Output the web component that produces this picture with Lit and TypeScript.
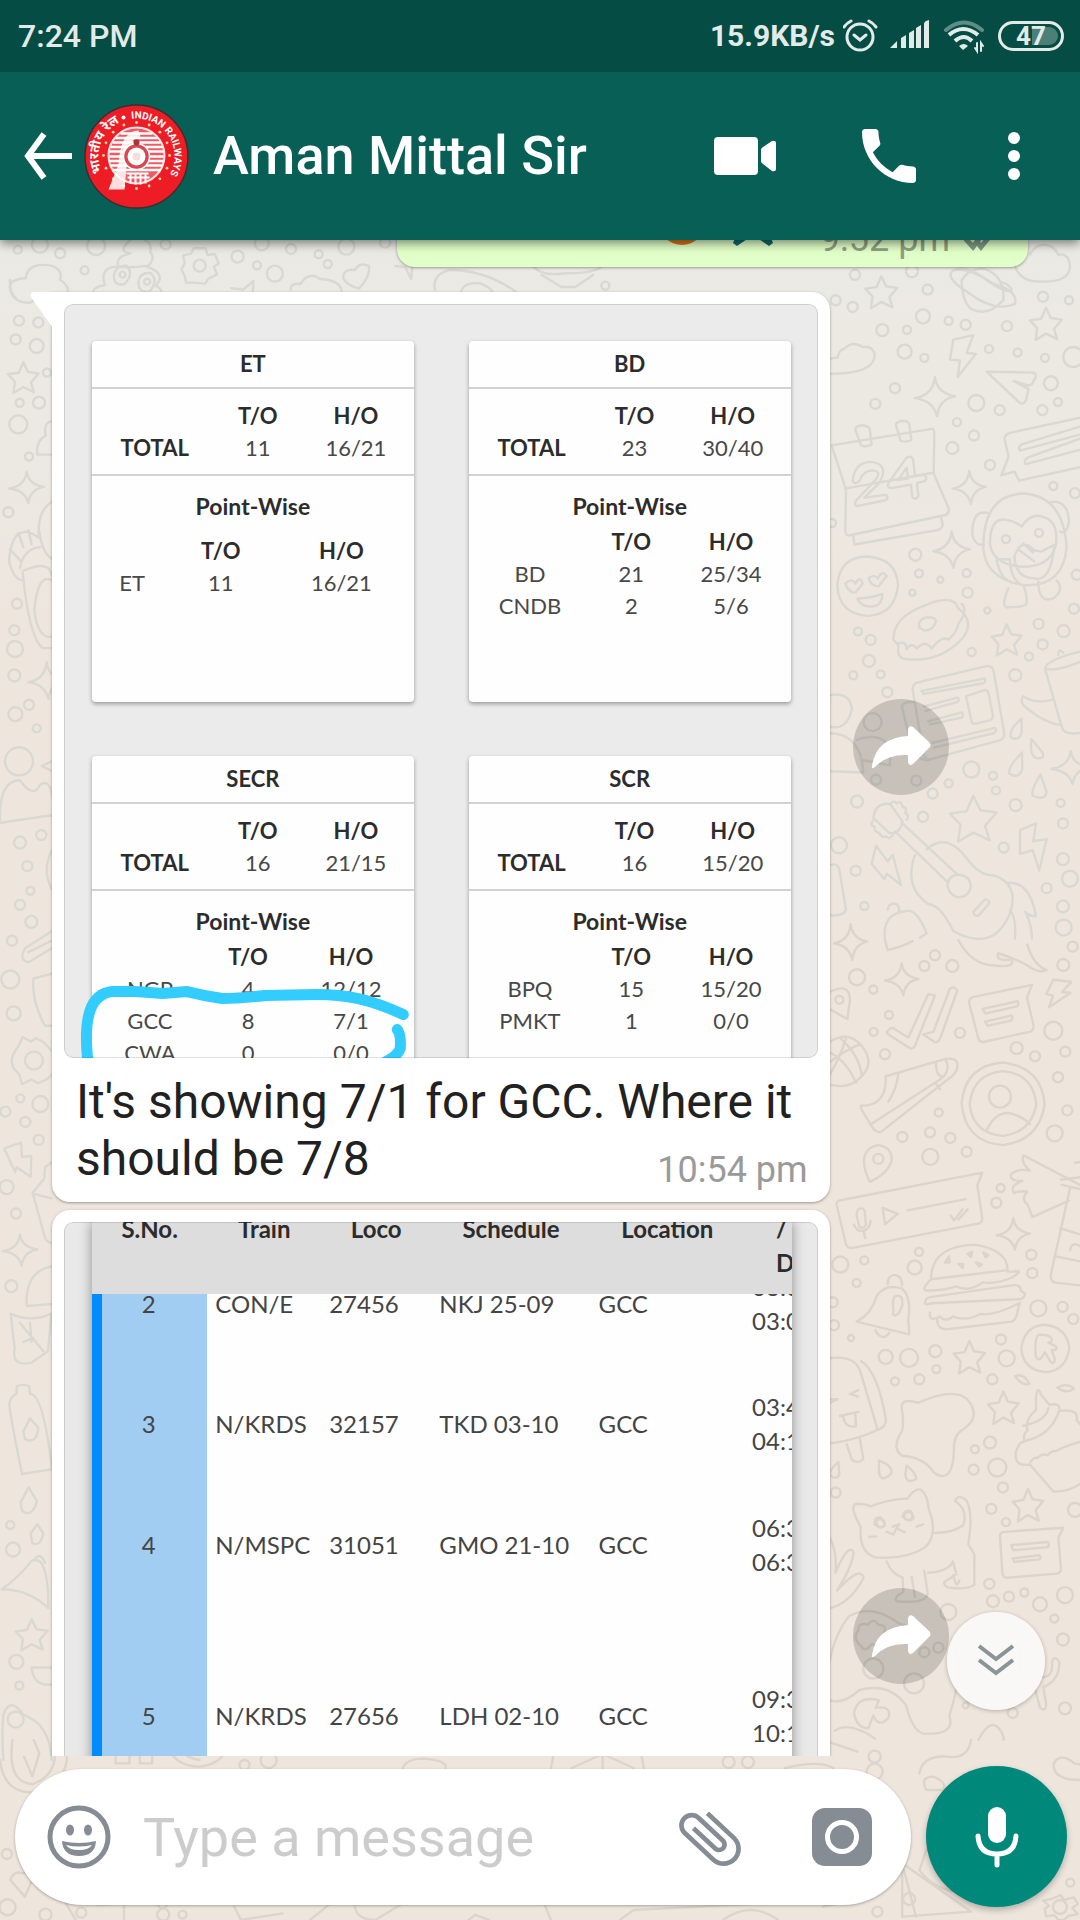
import { LitElement, html, css, svg, nothing } from "lit";
import { customElement, property } from "lit/decorators.js";

const FONT = css`Roboto, "Liberation Sans", sans-serif`;
const SHEET_FONT = css`Lato, "Open Sans", sans-serif`;

/* ---------- wallpaper ---------- */

interface Patch {
  x: number;
  y: number;
  sx: number;
  sy: number;
  dots: number[][];
  lines: string[];
}

const star = (x: number, y: number, w: number, h: number) =>
  `M${x} ${y - h}l${w * 0.3} ${h * 0.65}l${w * 0.7} ${h * 0.1}l${-w * 0.5} ${h * 0.6}l${w * 0.2} ${h * 0.65}l${-w * 0.7} ${-h * 0.35}l${-w * 0.65} ${h * 0.4}l${w * 0.1} ${-h * 0.75}l${-w * 0.45} ${-h * 0.5}l${w * 0.7} ${-h * 0.1}z`;
const spark = (x: number, y: number, w: number, h: number) =>
  `M${x} ${y - h}q${w * 0.1} ${h * 0.8} ${w} ${h * 0.95}q${-w * 0.8} ${h * 0.15} ${-w * 0.9} ${h}q${-w * 0.2} ${-h * 0.8} ${-w * 1.1} ${-h * 0.9}q${w * 0.9} ${-h * 0.15} ${w} ${-h * 1.05}z`;

const PATCHES: Patch[] = [
  {
    x: 0, y: 0, sx: 0.3954, sy: 0.3333,
    dots: [[45, 749, 4], [101, 734, 8], [152, 760, 5], [243, 738, 9], [214, 811, 4], [419, 733, 5], [505, 797, 6], [601, 770, 6], [650, 796, 4], [695, 821, 8], [662, 730, 7], [736, 747, 5], [806, 763, 4], [829, 792, 4], [876, 740, 8], [974, 728, 5], [1531, 857, 4], [310, 824, 3], [372, 845, 3]],
    lines: [
      "M40 895q-40-55 25-60q5-50 65-38q30 12 22 42q35 30 10 60",
      "M330 720q-35 35 0 40q-40 10-30 40q-50 0-35 55q-50 10-15 45M365 720q20 10 15 36q15 20-8 45q50 20 22 56q30 20 0 45M300 800q30 5 75-3",
      "M288 825q5-30 32-28q20 25-5 55q-28 8-27-27M350 845q5-30 32-25q20 25-5 55q-28 5-27-30",
      "M490 745l30 0l5 20l18-3l10 28l-12 10l8 24l-22 12l-8 15l-28-3l-20 0l-4-20l-8-20l8-18l-4-24l20-5z",
      "M868 835q0-30 30-25q10-25 35-12q5 30-25 68q-30-10-40-31",
      "M735 870q0-22 25-18q20-40 50-15q55 5 54 40",
      "M1100 870q-8-50 40-60q90 0 170 70M1165 880q5-35 50-30q30 15 32 30",
      "M1350 800q20 30 80 20q70 0 90-18M1370 825l50 36l35 0l45-36",
      "M585 865l30 4l26-26l-2 36M1000 798l25 4l15 35l3-45",
    ],
  },
  {
    x: 820, y: 240, sx: 0.3333, sy: 0.4464,
    dots: [[105, 78, 5], [276, 70, 6], [47, 135, 5], [98, 150, 5], [323, 111, 5], [309, 171, 7], [187, 202, 6], [261, 201, 4], [386, 181, 4], [437, 190, 5], [561, 193, 5], [669, 127, 5], [747, 135, 4], [254, 250, 7], [313, 264, 4], [507, 244, 4], [593, 252, 4], [675, 264, 4], [760, 262, 10], [225, 332, 5], [166, 367, 5], [469, 365, 8], [539, 381, 5], [693, 321, 7], [714, 363, 4], [667, 381, 5], [411, 408, 4], [462, 438, 5], [397, 466, 6], [510, 504, 5], [700, 551, 4], [765, 567, 5], [36, 634, 4], [286, 705, 6], [297, 747, 4], [361, 761, 3], [440, 746, 4], [277, 790, 3], [443, 790, 5], [502, 830, 3], [770, 750, 5], [762, 826, 5], [114, 877, 4], [152, 896, 5], [147, 943, 6], [100, 975, 4], [182, 973, 4], [202, 1013, 5], [455, 923, 4], [656, 860, 5], [668, 906, 5], [731, 876, 6], [627, 933, 4], [586, 975, 6], [454, 1186, 8], [519, 1200, 4], [386, 1217, 4], [338, 1240, 5], [528, 1233, 4], [309, 1292, 5], [111, 1258, 6], [587, 1266, 6], [722, 1261, 4], [729, 1307, 5], [57, 1356, 8], [107, 1413, 5], [551, 1361, 5], [729, 1387, 6], [750, 1431, 8], [680, 1452, 5], [133, 1492, 4], [729, 1493, 6], [731, 1540, 8], [168, 1209, 5], [289, 1211, 5], [158, 1080, 9], [558, 670, 4], [657, 656, 4]],
    lines: [
      star(184, 116, 48, 35), star(678, 187, 48, 35), spark(345, 352, 61, 45), spark(448, 555, 50, 38), spark(395, 695, 55, 42), star(560, 895, 45, 34), star(460, 1295, 70, 50), spark(752, 1183, 58, 38),
      "M425 90q25-30 70-25q60 15 55 70q-50 40-100 18q-25-20-25-63M400 68q45-8 120 30q75 15 65 45q-60 20-140-25q-75-35-45-50q40-15 100 22q70 35 75 20q-10-12-30-15",
      "M585 60q20 35 75 33q90 3 90-35q-5-30-35-25q-20-30-60-20q-20 10-25 20",
      "M28 300q140 0 136-45q-10-20-35-15q-30-15-55 3q-20 5-20 20l-25 3",
      "M400 223l60-10l-20 40l28 2l-55 52l7-37l-30-2z",
      "M500 295l140 2q10 2 6 12l-10 14q-8 5-20 1l-35-8l45 18l-8 25q-8 12-20 5z",
      "M35 460l300-37q8 0 8 10l-2 90l45 78q3 12-10 15l-290 46q-12 0-10-18l2-85zM75 557l260-35M100 662l3 20l250-32q15-5 15-12l-4-15",
      "M106 425q0-8 18-10q20 0 25 8l6 35q-15 7-32 2zM228 415q0-8 18-10q18 0 22 8l6 35q-15 6-32 2z",
      "M98 540q5-42 55-43q60 5 22 50l-42 30l65-6q10 8-2 12l-85 13q-10-2-3-12l60-48q18-20-12-20q-28 2-36 22q-14 12-22 2M205 545l55-58q18-5 20 8l5 34l26-3q14 6 4 14l-24 4l4 30q-8 9-18 2l-4-28l-62 8q-10-3-6-11zM234 538l30-4l-4-24z",
      "M780 398l-210 34q-18 5-16 15l12 38l-22 42l40-8l13 20l183-30M780 418l-175 40q-12 6-5 14l180-36M780 445l-155 42q-16 6-8 15l163-32",
      "M490 690q0-120 120-122q120 5 130 120q-10 90-130 85q-115-15-120-83M510 680q0-60 50-53q25 3 45 15q30-35 70-20q40 10 33 60q-15 50-100 50q-90-5-98-52M583 710q20-45 60-15l20 3l40-15q-10 85-60 75q-55 0-60-48M530 715l40 0q0 40 30 55q-60 0-70-55M505 612q-50-10-48 50q10 25 35 20M685 588q60-10 62 45q-10 30-27 20M565 780q-25 45 0 43q55 0 55-10q2-20-10-40M655 765q0 50 45 38q35-20 10-40M598 695l45 25M610 680l30 20",
      "M52 775q5-65 90-66q90 5 92 66q-10 65-92 67q-85-5-90-67M76 770q20-15 30 0q15-20 22 0l-22 20q-20 0-30-20M145 758q20-10 28 0q15-20 27-5l-25 23q-20 0-30-18M112 803q40 0 75-10q0 28-35 28q-30 0-40-18",
      "M220 895q0-50 90-75q90-30 105 5q50 30 15 65q-70 60-180 48q-20-5-15-30zM230 905q30-10 30 12q15-18 30-2q25-20 45 0q30-30 50-20q25-15 30-35q30-30 10-45M298 868q-5-20 25-23q25 0 25 10q-8 20-35 20z",
      "M278 1008q0-15 15-17l210-37q15 0 18 12l32 140q0 12-15 15l-205 42q-18 2-22-10zM305 1010l190-28q3 8-5 11l-180 24zM312 1045l100-20q10 5 0 10l-95 20M325 1078l100-20q8 6 0 12l-95 15M330 1128l195-35q8 8-4 12l-180 32M438 1022l58-14q8 0 10 8l13 50q0 8-10 10l-45 8q-8 0-10-8zM278 1035q-35 0-32 12l25 75q20 50 60 42",
      "M28 1020q60-10 68 30q-15 50-68 40M28 1105q95 0 102 88l-102-3M110 1120q80-20 100 22l0 35q-30-5-85-12",
      "M675 960q5-20 105-38M675 960q30 8 105-15M675 960l50 130q5 20 55 14M695 1030q-50 10-85-8q-10 10 0 20q60 40 115 45M715 930q0-18 15-5",
      "M605 1072q-40 25-32 42q25 10 32-12zM634 1118q-5 35 12 42q30 5 22-12zM606 1148q-45 35-37 48q30 12 38-12zM662 1197q-30 35-24 48q35 12 42-8z",
      "M160 1295q5-35 50-32l38 40q-10 30-40 25zM210 1265q10-12 20-3q12-8 18 8q15 0 8 14q14 5 4 15M158 1302q-10 10 6 12q-3 12 14 14q5 12 20 8q8 8 20-2M225 1325l160 115M245 1305l165 115M320 1365q60-40 120 20q40 40 80 38q80 20 50 85q-50 90-170 40q-40-60-75-60q-75-40-40-110M382 1445q5-25 38-23q35 5 32 30q-10 22-40 20q-25-5-30-27M460 1505l35-28q15 0 12 10l-32 27q-15 0-15-9M560 1440q70-5 88 75q-20 0-32-10q20 30 20 60M570 1500q20 20 15 65",
      "M168 1357l35 35l15-15l25 68l-42-25l-8 12l-38-35zM600 1322l48-15l-8 40l40-5l-22 70l-20-45l-38 8z",
      "M28 1400q25-5 30 10l20 90q-5 15-50 13M195 1568q-10-60 65-65q30-5 60 50l-20 10M203 1500q5-18 28-12q10 10 5 15",
    ],
  },
  {
    x: 820, y: 940, sx: 0.3333, sy: 0.5102,
    dots: [[345, 30, 5], [313, 51, 5], [397, 51, 6], [111, 73, 8], [160, 97, 4], [207, 147, 4], [161, 180, 4], [195, 224, 5], [420, 182, 5], [700, 178, 9], [590, 212, 6], [645, 228, 5], [736, 219, 5], [714, 269, 5], [742, 334, 5], [704, 379, 8], [758, 13, 5], [730, 49, 6], [356, 338, 4], [247, 386, 5], [330, 377, 5], [391, 388, 5], [331, 425, 8], [440, 415, 5], [175, 429, 5], [542, 486, 4], [529, 515, 5], [61, 636, 8], [133, 628, 4], [110, 672, 4], [284, 642, 7], [297, 611, 4], [634, 617, 5], [637, 653, 5], [655, 722, 8], [728, 719, 5], [760, 743, 5], [93, 780, 3], [38, 710, 5], [42, 755, 5], [197, 817, 7], [267, 819, 9], [346, 806, 6], [349, 841, 4], [225, 865, 4], [298, 861, 5], [543, 783, 5], [560, 820, 8], [517, 861, 5], [510, 985, 6], [465, 998, 4], [461, 1038, 5], [532, 1034, 9], [549, 1073, 5], [514, 1115, 5], [558, 1141, 4], [765, 1117, 7], [47, 1083, 5], [508, 1262, 5], [519, 1296, 6], [567, 1287, 5], [613, 1279, 4], [660, 1302, 7], [735, 1284, 8], [703, 1330, 4], [729, 1371, 6], [735, 1506, 6], [385, 1317, 8], [160, 1428, 10], [282, 1457, 10], [313, 1396, 5], [355, 1387, 5], [437, 1500, 3], [578, 1515, 5], [540, 307, 11], [58, 117, 4], [182, 1143, 4], [265, 1129, 4]],
    lines: [
      spark(92, 5, 50, 36), spark(245, 78, 50, 32), star(448, 817, 47, 31), star(550, 916, 46, 31), star(624, 1107, 46, 31), spark(580, 577, 50, 32),
      "M200 180l12-7q10-2 15 3l38 15l60-85l20 3l-60 98q-8 8-15 5l-65-27q-5-2-5-5M310 185l30-5l50-85q15-5 22 4l-52 95q-10 10-18 5z",
      "M448 125q-3-10 10-13l178-24l-15 25l20 55q0 10-12 12l-140 20q-12 0-15-10zM488 135l105-15q5 6-2 10l-95 14zM495 160l80-12q5 6-2 10l-70 10z",
      "M700 78l54 4l-28 20l25 2l-64 28l12-23l-20-3z",
      "M28 200q60-25 100 10q35 30 0 55q-40 30-100 18M28 240q50-25 90-35M60 192q60 35 65 75M28 220q50 15 80 60M28 265q30-30 50-72",
      "M122 325q80 0 75-58l180-34q45-4 33 22q-10 12-30 20l-195 100q-10 5-25-5l-33-35q-5-5-5-10M155 360l190-80q55-20 30-47M235 262q-5 30-30 55M345 280l15 12M348 240q0 30 25 27",
      "M28 102q60-20 62 15l-8 38l-54-20M132 430q5-25 45-28q40 5 38 30q-10 25-65 42q-20-25-18-44M425 320q10-75 125-80q115 10 124 82q-15 70-124 80q-115-5-125-82M449 322q10-60 100-65q90 5 100 65q-15 55-100 62q-90-5-100-62M500 373q25-35 65-34q40 5 65 22",
      "M50 520q-3-8 12-10l425-54l-15 25l15 65q0 8-12 10l-380 48q-15 0-18-10zM110 540q0-15 15-14q10 0 10 12l3 20q-8 10-20 4zM102 558q10 15 30 12q18-5 20-20M132 572l3 12M188 525l45 12l-38 20zM262 530l175-22M392 540l10 10l25-22M415 548l28-20",
      "M780 480l-170-58q-8 15 20 30q-40-5-58 8q0 14 35 12q-40 10-25 24q20-5 40-3q-20 15 0 25q10 15 15 25l110-32M722 470l58-5M725 480l55 8M750 487l-58 170q0 15 20 15l68 5M765 437l15-2M720 565l60 12M708 620l72 10M750 608q5-18 30-8",
      "M333 665q0-65 130-68q100 10 100 50l-230 18q-30 20-15 22q60 0 90-8q40 12 80-8q35 5 90-10q35-15 5-12M563 650l28 0M316 710q0-8 15-10l255-24q20 4 15 10l15 8q-5 10-20 10l-260 8q-25 5-20-2M330 730q-5 20 30 8q15 12 40 0q40 10 80-5q40 5 120-22l-5 10q-5 25-20 27l-195 15q-30 0-28-20M375 632l12-12l2 12zM415 635l15 0l-2 8zM443 615l14-4l-4 10zM468 632l18 4l-8 4zM490 612l15 6l-8 4z",
      "M110 748q45-15 60-50q25-25 75-15q30 15 20 60l3 30zM203 675q0-20 25-18q20 5 18 20M166 765q10 15 30 13l12-8M220 725q-5-28 12-28q18 0 15 18q-12 25-27 20z",
      "M604 800q10-45 72-46q65 5 72 46q-10 45-72 47q-68-5-72-47M647 815q-3-36 8-41q30-2 38 6q8 8-8 9l24 8q4 8-14 7l10 18q-4 12-14 4l-16-18l-12 12q-12 5-16-5",
      "M28 820q80-8 95 30l50 110q-60 20-145 27M123 825q50 20 75 115q0 15-25 20M90 890l25-8M92 890l22 5M60 933l55-8M70 935q5 22 38 18l-2-22M80 988l15 30q15 10 35 0l-10-40M28 900l25 0l-25 8",
      "M245 915q0-18 50-8q120-35 155 0q30 30-20 52q-30 10-28 40q-3 70-60 45q-30-30-95-33q-35-15 0-50q5-15-2-46M177 1020q40 10 38 25q-30 20-38 0zM260 1030q30 15 28 27q-30 10-32-10zM55 1023q-25 15-27 25q20 12 30 0z",
      "M630 1028q-50 5-42-25q10-20 25-20q-5-15 10-22q-10-20 25-40l0-25q5-25 15-5l25 20q35-5 30 12q60-5 52 18l10 8M613 982q80-10 105-60M610 952q70-10 75-35M630 1028l70 53q50 0 80-15M632 1023q10-10 20-8q15-10 30-5q15-10 25-8q20-8 70-18M585 855q25-8 43 15q-20 5-43-15M712 877q30-10 50 2q-25 12-50-2",
      "M122 1150q-35-40-15-45q30 0 45 5q60-15 110-15q20-20 40-18q20 8 24 38q30 50-10 75q-60 25-150 20q-50-10-44-60M163 1145q0-15 20-13q10 10 12 15q-10 10-32-2M248 1130q5-15 25-10l8 12q-10 12-33-2M200 1160l20 5l10-12l25 8M218 1150l20-5l-10 10M148 1170l20-1M290 1150l20-5M340 1162q60 0 90-15q15-30-25-48q10-15 35 0q20 25 5 85l18 20l0 60q-20 10-80 5q-20-8-2-14l28-12l-10-25q-15 20-75 22M200 1218q15 25 48 32l2 28q-30 10-20 18q90 5 93-15l-10-45M275 1248l10 40M400 1245q10 30 18 10",
      "M540 1168q0-8 15-8l175-8l-15 20l8 60q0 8-12 10l-150 8q-12 0-14-10zM574 1186l110-6q5 5 0 10l-105 6zM578 1212l80-6q8 5 0 8l-75 5z",
      "M28 1170q25 30 18 70q40-60 55-40q-5 30-50 75q70-50 80-25q-40 50-103 60M28 1415q20-60 60-90q70-25 150 15q60 10 20 25M28 1490q40 10 90-20q90-15 140 30q20 50 50 55q100 5 80-35q50-100 10-150M115 1352q0-15 30-10q15-15 30 0q30 0 15 18q20 20-5 25l-30-5q-20 18-30 5q-30-15-10-33M102 1515q10-35 75-25l-10 15q50-5 38 20q-30 20-45-5l-15 25q-35 0-43-30M45 1550q40-20 120 15M475 1568q40-50 70-15q10 15 5 15M600 1385q-10 60 40 70l20 50q20 10 18-10l-8-30q50-15 48-50q-15-15-22 0q5 30-30 30",
      "M415 0q40 50 110 50q60 5 50-12q-50 5-40-12q50 10 90 25q30 15 55 8q-40-10-58-50M195 0l8 20q50-8 75-18",
    ],
  },
  {
    x: 0, y: 280, sx: 0.3333, sy: 0.9439,
    dots: [[57, 43, 5], [115, 45, 5], [47, 63, 5], [110, 70, 7], [141, 98, 4], [59, 130, 4], [117, 130, 6], [55, 153, 9], [87, 187, 4], [25, 246, 5], [51, 343, 5], [43, 371, 5], [45, 391, 8], [43, 419, 6], [87, 450, 5], [46, 460, 7], [110, 475, 4], [60, 596, 6], [124, 588, 5], [82, 621, 5], [91, 647, 4], [60, 662, 5], [94, 680, 6], [36, 700, 5], [31, 741, 9], [41, 777, 7], [102, 827, 9], [16, 881, 5], [61, 867, 4], [76, 892, 5], [121, 873, 8], [116, 911, 5], [20, 961, 7], [48, 989, 5], [34, 1066, 6], [31, 1319, 4], [39, 1345, 7], [49, 1464, 7], [58, 1489, 4], [47, 1525, 8], [57, 510, 14]],
    lines: [
      star(70, 103, 46, 16), spark(80, 220, 52, 17), spark(140, 425, 55, 20), spark(60, 1028, 52, 17), star(95, 1435, 48, 16),
      "M30 0q-5 25 60 24l40-8M155 150q-25 0-18 15q-30 5-25 20l43 0",
      "M155 235q-45 10-38 38q-80-20-90 25q15 20 40 20M117 265q10 25 38 30M60 305q10-20 60-22M70 308q80-12 85 5M68 310q20 70 60 80l27 0M103 350q10-40 52-32M103 350q10 30 52 28M30 285l30 12M55 268l15 15M85 265l10 15",
      "M0 575q-5-45 60-45q40 20 60 5q30-8 38 15M0 575l155-8M155 510l-30 5l30 5M155 605q-30 20 0 40",
      "M155 690l-80 18q-20 12 10 15l70-15M155 700l-70 12M155 735l-55 5q-5 25 35 50l20 0",
      "M40 820l18-10l10-8l25 5l15-4l25 5l20 8M38 834l20 8l8 10l28-5l20 4l25-4l20-6M40 820q-10 8 0 14",
      "M13 920l50-6l3 15l28-1l-2 22l-42-10l-5 5zM155 935l-20 5l-2 12l-35 15l35 45q5 8 22 8M98 968l57 5",
      "M155 1045q-80 5-75 42l75-2M32 1095q60 10 122 0l-10 40l-50 12q-60 5-50-15zM60 1105l70 30M90 1105l5 20M70 1125l30-4",
      "M50 1180l0-8q20-3 38 0l2 8q40 0 66 80l-90 5q-40-70-38-75q5-8 22-10zM70 1220l20-14l25 10q-5 18-40 12zM62 1295l24-16l25 15q-15 18-45 10zM92 1328l20-10l18 10q-10 15-33 10z",
      "M5 1387q50-12 90-30q50-8 50 50q-60-20-140-20M105 1355q15-8 30 4M155 1470l-60 0q5 20 60 18M10 1520q20-20 60 0q80 10 85 48M10 1520q-5 20 0 48",
    ],
  },
  {
    x: 0, y: 1740, sx: 0.6887, sy: 0.3333,
    dots: [[355, 75, 5], [390, 60, 8], [1058, 66, 6], [1086, 66, 6], [1270, 50, 6], [1270, 95, 8], [10, 342, 5], [11, 502, 8], [66, 524, 6], [118, 518, 5], [237, 524, 6], [236, 494, 4], [265, 524, 4], [1320, 477, 6], [1274, 515, 5], [1498, 425, 5], [1554, 428, 4], [1539, 501, 7], [60, 395, 5]],
    lines: [
      "M0 60q5 95 45 97q45-15 52-95l0-62M18 0q-8 130 30 132q40-30 30-132M35 50l12 60l10-70l-8-40M168 10l0 60l20 0l0-25l15 0l0 25l18 0l0-70M240 0q10 80 50 80q40-10 40-80M255 0q10 55 35 60",
      "M585 84q5-28 30-28q35 5 32 28M800 84l8-84M935 84l-8-84M830 0l90 84M920 0l-90 84M875 0l0 84M1140 84q50-25 70 0M1195 0l50 35M1335 100q5-55 40-50q30 10 35-50M1345 150q-10-40 10-40q20 15 15 40zM1370 185l-35 205q20 60 65 70",
      "M15 420q5-30 18-20q15-10 15 15l-12 55zM90 470l20 70M140 495l40-5l0 50M340 500l10 40l60-20M450 540l30-50M515 490q0 50 30 50l40-50M680 540l10-15l20 15M790 490l10 50M900 540l20-30l190-20M1050 540q40-60 80 0M1195 500l50-20M1310 370l100 145l-100 15zM1310 370l20 160M1530 70q10-35 30 0q25 5 8 50q-40 0-38-50M1540 465l5 15l14-8l6 20l-8 12l8 18l-14 6l-6 12l-8 0l-6-14l-12 3l-2-22l6-10l-8-15l12-5z",
    ],
  },
];

@customElement("chat-wallpaper")
export class ChatWallpaper extends LitElement {
  static styles = css`
    :host { display: block; background: linear-gradient(#eaeae5 0, #ece9e2 24%, #eee6dd 32%, #eee6dd 100%); }
    .art { display: block; width: 100%; height: 100%; }
    .line { fill: none; stroke: #d9d8d2; stroke-width: 2.4; stroke-linejoin: round; stroke-linecap: round; }
    .low .line { stroke: #dcd5cb; }
    .line path { vector-effect: non-scaling-stroke; }
  `;
  render() {
    return html`<svg class="art" viewBox="0 0 1080 1920" preserveAspectRatio="xMidYMin slice" aria-hidden="true">
      ${PATCHES.map((p) => svg`<g class=${p.y > 900 ? "low" : "high"}><g class="line">
        ${p.dots.map(([x, y, r]) => svg`<circle cx=${p.x + x * p.sx} cy=${p.y + y * p.sy} r=${r}></circle>`)}
        <g transform="translate(${p.x} ${p.y}) scale(${p.sx} ${p.sy})">${p.lines.map((d) => svg`<path d=${d}></path>`)}</g>
      </g></g>`)}
    </svg>`;
  }
}

/* ---------- status bar ---------- */

@customElement("status-bar")
export class StatusBar extends LitElement {
  static styles = css`
    :host { display: flex; align-items: center; justify-content: space-between; height: 72px; padding: 0 16px 0 18px; background: #054c44; color: #e3ebe9; font: 500 32px/40px ${FONT}; }
    .right { display: flex; align-items: center; gap: 8px; }
    .rate { font-size: 30px; font-weight: 700; }
    .icons { display: block; }
    .battery { position: relative; box-sizing: border-box; width: 66px; height: 30px; border: 3px solid #e3ebe9; border-radius: 15px; font: 700 26px/26px ${FONT}; text-align: center; }
    .charge { position: absolute; left: 31px; top: 3px; width: 26px; height: 18px; border-radius: 0 9px 9px 0; background: #4a8078; }
    .level { position: relative; display: block; margin-top: -1px; }
  `;
  render() {
    return html`
      <span>7:24 PM</span>
      <div class="right">
        <span class="rate">15.9KB/s</span>
        <svg class="icons" width="147" height="36" viewBox="843 19 147 36" fill="none" stroke="#e3ebe9" stroke-width="3" stroke-linecap="round" aria-hidden="true">
          <circle cx="860" cy="38" r="13"></circle>
          <path d="M854 36l6 5l6-5M844 28q3-4 7-6M876 28q-3-4-7-6"></path>
          <path stroke="none" fill="#e3ebe9" d="M890 49l7-7v7zM901 49v-10l5-3v13zM909 49v-15l5-3v18zM916 49v-20l5-3v23zM924 49v-24q0-3 5-4v28z"></path>
          <path stroke="#5e8c86" stroke-width="4" d="M946 31q18-15 36 0"></path>
          <path stroke-width="4" stroke-linecap="butt" d="M949 36q14-12 29 0M955 42q9-8 17 0"></path>
          <path stroke="none" fill="#e3ebe9" d="M959 47q5-4 9 0l-5 4z"></path>
          <path stroke-width="2" d="M977 44v8l-2-3M981 52v-8l2 3"></path>
        </svg>
        <div class="battery"><span class="charge"></span><span class="level">47</span></div>
      </div>`;
  }
}

/* ---------- conversation header ---------- */

@customElement("chat-header")
export class ChatHeader extends LitElement {
  static styles = css`
    :host { position: relative; z-index: 2; display: flex; align-items: center; height: 168px; padding: 0 60px 0 24px; background: #085f55; color: #fff; box-shadow: 0 3px 10px rgba(0, 0, 0, 0.5); }
    button { display: block; padding: 0; border: 0; background: none; color: inherit; cursor: pointer; }
    svg { display: block; }
    .avatar { margin: 0 24px 0 12px; }
    .name { flex: 1; margin: 0; font: 500 54px/64px ${FONT}; white-space: nowrap; overflow: hidden; text-overflow: ellipsis; }
    .actions { display: flex; align-items: center; gap: 86px; }
    .more { margin-left: 6px; }
    .ring { font: 700 10px ${FONT}; fill: #fff; }
    .hindi { font: 700 13px "Noto Sans Devanagari", "Noto Sans", sans-serif; fill: #fff; }
  `;
  render() {
    const studs = Array.from({ length: 16 }, (_, i) => (i * Math.PI) / 8);
    return html`
      <button aria-label="Back"><svg width="48" height="48" viewBox="24 132 48 48" fill="none" stroke="#fff" stroke-width="6"><path d="M44 134L28 156L44 178M29 156H72"></path></svg></button>
      <svg class="avatar" width="105" height="105" viewBox="-52.5 -52.5 105 105" role="img" aria-label="Profile photo">
        <defs><path id="arc" d="M-5 -37.7A38 38 0 0 1 13 35.7"></path><path id="arcLeft" d="M-34.4 16A38 38 0 0 1 -13 -35.7"></path></defs>
        <circle r="51.5" fill="#ee1c25" stroke="#3a2f2f" stroke-width="1.5"></circle>
        <text class="ring"><textPath href="#arc">INDIAN RAILWAYS</textPath></text>
        <text class="hindi"><textPath href="#arcLeft">भारतीय रेल</textPath></text>
        <circle cx="-13" cy="-39" r="2" fill="#fff"></circle>
        ${studs.map((a) => svg`<circle cx=${33 * Math.sin(a)} cy=${33 * Math.cos(a) - 1} r="1.4" fill="#f8d9a0"></circle>`)}
        <circle cy="-1" r="28" fill="#ef5a62" stroke="#fbe3e3" stroke-width="2"></circle>
        <path stroke="#fff" stroke-width="2.4" d="M-16 -23H16M-21 -18.5H21M-24 -14H24M-26 -9.5H26M-27 -5H27M-27 0H27M-27 4.5H27M-26 9H26M-24 13.5H24"></path>
        <path fill="#fff" fill-opacity=".85" d="M-28 33L-18 8Q-16 -26 2 -26L4 -20Q-8 -18 -9 0L-12 33Z"></path>
        <path stroke="#fff" stroke-width="2" d="M-10 17H12M-9 21H13M-6 16V27M-1 16V28M4 16V28M9 16V27"></path>
        <circle r="13" fill="#d8474f" stroke="#fff" stroke-width="1.5"></circle>
        <circle r="9" fill="#fff"></circle><circle r="4" fill="#f6dcdc"></circle>
        <circle cy="-14" r="3" fill="#a8323a"></circle>
      </svg>
      <h1 class="name">Aman Mittal Sir</h1>
      <div class="actions">
        <button aria-label="Video call"><svg width="62" height="40" viewBox="713 136 62 40" fill="#fff"><rect x="713" y="137" width="44" height="38" rx="4"></rect><path d="M760 150q0-2 2-3l9-6q4-1 4 2v26q0 3-4 2l-9-7q-2-1-2-3z"></path></svg></button>
        <button aria-label="Voice call"><svg width="54" height="54" viewBox="3 3 18 18" fill="#fff"><path d="M6.62 10.79c1.44 2.83 3.76 5.14 6.59 6.59l2.2-2.2c.27-.27.67-.36 1.02-.24 1.12.37 2.33.57 3.57.57.55 0 1 .45 1 1V20c0 .55-.45 1-1 1-9.39 0-17-7.61-17-17 0-.55.45-1 1-1h3.5c.55 0 1 .45 1 1 0 1.25.2 2.45.57 3.57.11.35.03.74-.25 1.02l-2.2 2.2z"></path></svg></button>
        <button class="more" aria-label="More options"><svg width="12" height="48" viewBox="0 0 12 48" fill="#fff"><circle cx="6" cy="6" r="6"></circle><circle cx="6" cy="24" r="6"></circle><circle cx="6" cy="42" r="6"></circle></svg></button>
      </div>`;
  }
}

/* ---------- photo 1: shed cards ---------- */

interface Shed {
  name: string;
  total: [string, string];
  cols: [number, number, number];
  low?: boolean;
  points: [string, string, string][];
}

const SHEDS: Shed[] = [
  { name: "ET", total: ["11", "16/21"], cols: [25, 30, 45], low: true, points: [["ET", "11", "16/21"]] },
  { name: "BD", total: ["23", "30/40"], cols: [38, 25, 37], points: [["BD", "21", "25/34"], ["CNDB", "2", "5/6"]] },
  { name: "SECR", total: ["16", "21/15"], cols: [36, 25, 39], points: [["NGP", "4", "12/12"], ["GCC", "8", "7/1"], ["CWA", "0", "0/0"]] },
  { name: "SCR", total: ["16", "15/20"], cols: [38, 25, 37], points: [["BPQ", "15", "15/20"], ["PMKT", "1", "0/0"]] },
];

@customElement("shed-photo")
export class ShedPhoto extends LitElement {
  static styles = css`
    :host { position: relative; display: block; box-sizing: border-box; aspect-ratio: 1; overflow: hidden; border-radius: 9px; background: #ebebeb; color: #484848; font: 400 22px/32px ${SHEET_FONT}; }
    .grid { display: grid; grid-template-columns: 1fr 1fr; gap: 54px 55px; padding: 37px 27px 0 28px; }
    .card { height: 361px; border-radius: 4px; background: #fefefe; box-shadow: 0 2px 4px rgba(0, 0, 0, 0.35); text-align: center; }
    .title { margin: 0; padding: 7px 0; border-bottom: 2px solid #d2d2d2; color: #2c2c2c; font: 700 22px/32px ${SHEET_FONT}; }
    .total { padding: 11px 0 10px; border-bottom: 2px solid #d2d2d2; }
    .points { padding-top: 14px; }
    .sub { margin: 0 0 4px; color: #2c2c2c; font: 700 23px/32px ${SHEET_FONT}; }
    .low { padding-top: 9px; }
    table { width: 100%; table-layout: fixed; border-collapse: collapse; }
    th, td { padding: 0; }
    th { color: #2c2c2c; font-weight: 700; }
    .frame { position: absolute; inset: 0; border: 1px solid rgba(0, 0, 0, 0.12); border-radius: 9px; }
    .ink { position: absolute; left: 0; top: 0; width: 100%; height: 100%; fill: none; stroke: #33ccff; stroke-width: 11; stroke-linecap: round; stroke-linejoin: round; }
  `;
  private grid(cols: number[], rows: string[][], headRow: boolean) {
    return html`<table>
      <colgroup>${cols.map((c) => html`<col style="width:${c}%">`)}</colgroup>
      <thead><tr><td></td><th scope="col">T/O</th><th scope="col">H/O</th></tr></thead>
      <tbody>${rows.map((r) => html`<tr>${headRow ? html`<th scope="row">${r[0]}</th>` : html`<td>${r[0]}</td>`}<td>${r[1]}</td><td>${r[2]}</td></tr>`)}</tbody>
    </table>`;
  }
  render() {
    return html`
      <div class="grid">${SHEDS.map((s) => html`
        <section class="card">
          <h2 class="title">${s.name}</h2>
          <div class="total">${this.grid([39, 25, 36], [["TOTAL", ...s.total]], true)}</div>
          <div class="points">
            <h3 class="sub">Point-Wise</h3>
            <div class=${s.low ? "low" : ""}>${this.grid(s.cols, s.points, false)}</div>
          </div>
        </section>`)}
      </div>
      <svg class="ink" viewBox="64 304 753 753" aria-hidden="true">
        <path d="M403 1014Q380 1003 358 998Q338 994 317 994L265 995Q240 998 222 998Q203 995 187 991L163 993L135 991H112Q96 993 90 1010Q84 1028 88 1062"></path>
        <path d="M397 1029Q401 1034 400 1048Q398 1055 384 1062"></path>
      </svg>
      <div class="frame"></div>`;
  }
}

/* ---------- photo 2: loco table ---------- */

interface Loco {
  no: string;
  train: string;
  loco: string;
  schedule: string;
  at: string;
  times: [string, string];
  size: string;
}

const LOCOS: Loco[] = [
  { no: "2", train: "CON/E", loco: "27456", schedule: "NKJ 25-09", at: "GCC", times: ["03:0", "03:0"], size: "cut" },
  { no: "3", train: "N/KRDS", loco: "32157", schedule: "TKD 03-10", at: "GCC", times: ["03:4", "04:1"], size: "short" },
  { no: "4", train: "N/MSPC", loco: "31051", schedule: "GMO 21-10", at: "GCC", times: ["06:3", "06:3"], size: "short" },
  { no: "5", train: "N/KRDS", loco: "27656", schedule: "LDH 02-10", at: "GCC", times: ["09:3", "10:1"], size: "tall" },
];

@customElement("loco-photo")
export class LocoPhoto extends LitElement {
  static styles = css`
    :host { position: relative; display: block; box-sizing: border-box; aspect-ratio: 1; overflow: hidden; padding: 0 26px 0 28px; border-radius: 9px; background: #e9e9e9; color: #444; font: 400 24px/34px ${SHEET_FONT}; }
    .sheet { height: 100%; overflow: hidden; background: #fefefe; }
    .wrap { height: 100%; box-shadow: 0 0 12px rgba(0, 0, 0, 0.4); }
    table { width: 103%; table-layout: fixed; border-collapse: separate; border-spacing: 0; }
    th { height: 72px; padding: 0; vertical-align: top; background: #ddd; color: #2c2c2c; font-weight: 700; line-height: 34px; }
    .head { display: block; margin-top: -10px; }
    .date { padding-left: 32px; text-align: left; }
    td { padding: 0 0 0 8px; white-space: nowrap; vertical-align: middle; }
    .no { padding: 0 12px 0 0; border-left: 10px solid #008cff; background: #a2cdf2; text-align: center; }
    .cut td { height: 70px; vertical-align: top; line-height: 20px; }
    .short td { height: 121px; }
    .tall td { height: 220px; }
    .times { display: block; line-height: 34px; }
    .cut .times { display: flex; flex-direction: column; justify-content: flex-end; height: 44px; overflow: hidden; }
    .line { display: block; }
    .frame { position: absolute; inset: 0; border: 1px solid rgba(0, 0, 0, 0.12); border-radius: 9px; }
  `;
  render() {
    return html`<div class="wrap"><div class="sheet"><table>
      <colgroup>${[16, 15.8, 15.3, 22.1, 21.3, 9.5].map((w) => html`<col style="width:${w}%">`)}</colgroup>
      <thead><tr>
        ${["S.No.", "Train", "Loco", "Schedule", "Location"].map((h) => html`<th scope="col"><span class="head">${h}</span></th>`)}
        <th class="date" scope="col"><span class="head">/<br>D</span></th>
      </tr></thead>
      <tbody>${LOCOS.map((r) => html`<tr class=${r.size}>
        <td class="no">${r.no}</td><td>${r.train}</td><td>${r.loco}</td><td>${r.schedule}</td><td>${r.at}</td>
        <td><span class="times">${r.times.map((t) => html`<span class="line">${t}</span>`)}</span></td>
      </tr>`)}</tbody>
    </table></div></div><div class="frame"></div>`;
  }
}

/* ---------- incoming message ---------- */

@customElement("photo-message")
export class PhotoMessage extends LitElement {
  @property() caption = "";
  @property() time = "";
  @property({ type: Boolean }) tail = false;

  static styles = css`
    :host { display: flex; align-items: center; flex: none; }
    .bubble { position: relative; box-sizing: border-box; width: 72%; margin-left: 52px; padding: 12px; border-radius: 18px; background: #fff; box-shadow: 0 1px 3px rgba(0, 0, 0, 0.35); }
    .bubble.first { border-top-left-radius: 0; }
    .tail { position: absolute; left: -22px; top: 0; }
    .foot { display: grid; padding: 15px 10px 0 12px; }
    .caption, .time { grid-area: 1 / 1; margin: 0; font-family: ${FONT}; }
    .caption { min-height: 57px; padding-bottom: 3px; color: #212121; font-size: 48px; line-height: 57px; }
    .time { align-self: end; justify-self: end; color: #9a9a9a; font-size: 36px; line-height: 40px; }
    .forward { display: grid; place-items: center; flex: none; width: 96px; height: 96px; margin-left: 23px; padding: 0; border: 0; border-radius: 50%; background: rgba(0, 0, 0, 0.16); cursor: pointer; }
  `;
  render() {
    return html`
      <article class="bubble ${this.tail ? "first" : ""}">
        ${this.tail ? html`<svg class="tail" width="23" height="36" viewBox="0 0 23 36" aria-hidden="true"><path fill="#fff" d="M4 0H23V36L1 5Q-1 0 4 0Z"></path></svg>` : nothing}
        <slot></slot>
        <div class="foot">
          <p class="caption">${this.caption}</p>
          ${this.time ? html`<time class="time">${this.time}</time>` : nothing}
        </div>
      </article>
      <button class="forward" aria-label="Forward"><svg width="60" height="46" viewBox="0 0 60 46"><path fill="#fff" d="M1 42Q5 14 37 12V5Q38 1 42 3L59 19Q60 21 59 23L42 40Q38 43 37 38V31Q16 30 4 43Q0 46 1 42Z"></path></svg></button>`;
  }
}

/* ---------- message composer ---------- */

@customElement("chat-composer")
export class ChatComposer extends LitElement {
  static styles = css`
    :host { display: flex; align-items: center; gap: 15px; padding: 10px 13px 13px 15px; }
    .field { display: flex; align-items: center; flex: 1; min-width: 0; box-sizing: border-box; height: 136px; padding: 0 39px 0 32px; border-radius: 68px; background: #fff; box-shadow: 0 1px 3px rgba(0, 0, 0, 0.3); }
    button { display: block; flex: none; padding: 0; border: 0; background: none; cursor: pointer; }
    svg { display: block; }
    .text { flex: 1; min-width: 0; margin: 0 24px 0 32px; padding: 2px 0 0; border: 0; outline: 0; background: none; color: #212121; font: 400 54px/64px ${FONT}; }
    .text::placeholder { color: #ccc; opacity: 1; }
    .camera { margin-left: 68px; }
    .mic { display: grid; place-items: center; width: 141px; height: 141px; border-radius: 50%; background: #00897b; box-shadow: 0 3px 6px rgba(0, 0, 0, 0.25); }
  `;
  render() {
    return html`
      <div class="field">
        <button aria-label="Emoji"><svg width="64" height="64" viewBox="-32 -32 64 64"><circle r="29" fill="none" stroke="#868c93" stroke-width="5"></circle><g fill="#868c93"><ellipse cx="-9" cy="-7" rx="4" ry="5.5"></ellipse><ellipse cx="9" cy="-7" rx="4" ry="5.5"></ellipse><path d="M-17 4Q0 8 17 4Q16 19 0 19Q-16 19 -17 4Z"></path></g><path fill="#fff" d="M-13 8Q0 11 13 8Q10 13 0 13Q-10 13 -13 8Z"></path></svg></button>
        <input class="text" type="text" placeholder="Type a message" aria-label="Type a message">
        <button aria-label="Attach"><svg width="66" height="60" viewBox="-10.5 -9.5 21 19"><path fill="#868c93" transform="rotate(-47) translate(-12.5 -12)" d="M16.5 6v11.5c0 2.21-1.79 4-4 4s-4-1.79-4-4V5c0-1.38 1.12-2.5 2.5-2.5s2.5 1.12 2.5 2.5v10.5c0 .55-.45 1-1 1s-1-.45-1-1V6H10v9.5c0 1.38 1.12 2.5 2.5 2.5s2.5-1.12 2.5-2.5V5c0-2.21-1.79-4-4-4S7 2.79 7 5v12.5c0 3.04 2.46 5.5 5.5 5.5s5.5-2.46 5.5-5.5V6h-1.5z"></path></svg></button>
        <button class="camera" aria-label="Camera"><svg width="60" height="58" viewBox="-30 -29 60 58"><rect x="-30" y="-29" width="60" height="58" rx="13" fill="#868c93"></rect><circle r="14.5" fill="none" stroke="#fff" stroke-width="5"></circle></svg></button>
      </div>
      <button class="mic" aria-label="Record voice message"><svg width="46" height="62" viewBox="-23 -31 46 62"><rect x="-9" y="-30" width="18" height="36" rx="9" fill="#fff"></rect><path fill="none" stroke="#fff" stroke-width="5" stroke-linecap="round" d="M-19 -1Q-18 17 0 17Q18 17 19 -1M0 17V28"></path></svg></button>`;
  }
}

/* ---------- page ---------- */

@customElement("app-root")
export class AppRoot extends LitElement {
  static styles = css`
    :host { position: relative; display: flex; flex-direction: column; height: 100vh; overflow: hidden; background: #eee6dd; font-family: ${FONT}; }
    .paper { position: absolute; inset: 0; }
    status-bar, chat-header, .chat, chat-composer { position: relative; flex: none; }
    status-bar { z-index: 3; }
    chat-header { z-index: 2; }
    .chat { display: flex; flex-direction: column; gap: 8px; flex: 1; min-height: 0; overflow: hidden; }
    .sent { display: flex; align-items: center; justify-content: flex-end; flex: none; align-self: flex-end; box-sizing: border-box; width: 58.4%; min-width: 0; margin: -36px 52px 17px 0; padding: 14px 34px 7px 0; border-radius: 18px; background: #e1ffc8; box-shadow: 0 1px 3px rgba(0, 0, 0, 0.35); color: #8d9f7f; font-size: 36px; line-height: 42px; }
    .stickers { margin-right: 46px; }
    .ticks { margin-left: 14px; }
    .jump { position: absolute; right: 35px; bottom: 46px; display: grid; place-items: center; width: 98px; height: 98px; padding: 0; border: 0; border-radius: 50%; background: rgba(250, 249, 248, 0.94); box-shadow: 0 1px 4px rgba(0, 0, 0, 0.25); cursor: pointer; }
  `;
  render() {
    return html`
      <chat-wallpaper class="paper"></chat-wallpaper>
      <status-bar></status-bar>
      <chat-header></chat-header>
      <main class="chat">
        <article class="sent">
          <svg class="stickers" width="108" height="42" viewBox="671 214 108 42" aria-hidden="true"><circle cx="687" cy="218" r="23" fill="#d8761a"></circle><path fill="#0d6b6b" d="M745 222L758 200L771 222L778 239L774 242L758 231L742 242L738 239Z"></path></svg>
          <time>9:52 pm</time>
          <svg class="ticks" width="30" height="24" viewBox="0 0 30 24" fill="none" stroke="#7d9a86" stroke-width="5" aria-hidden="true"><path d="M1 11L9 20L20 5M14 16L17 20L29 5"></path></svg>
        </article>
        <photo-message tail caption="It's showing 7/1 for GCC. Where it should be 7/8" time="10:54 pm"><shed-photo></shed-photo></photo-message>
        <photo-message><loco-photo></loco-photo></photo-message>
        <button class="jump" aria-label="Scroll to latest"><svg width="36" height="36" viewBox="0 0 36 36" fill="none" stroke="#8b9598" stroke-width="4"><path d="M1 3L18 16L35 3M1 17L18 30L35 17"></path></svg></button>
      </main>
      <chat-composer></chat-composer>`;
  }
}
